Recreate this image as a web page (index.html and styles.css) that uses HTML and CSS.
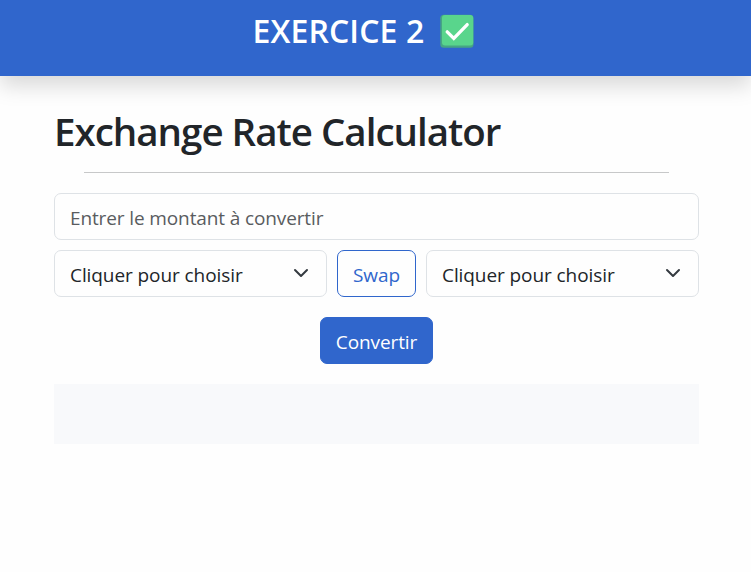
FILE: index.html
```html
<!DOCTYPE html>
<html lang="fr">
<head>
<meta charset="utf-8">
<title>Exchange Rate Calculator</title>
<link rel="stylesheet" href="styles.css">
</head>
<body>
<header class="topbar">
  <h2 class="topbar-title">EXERCICE 2</h2>
  <svg class="topbar-check" viewBox="0 0 34 34" aria-hidden="true">
    <rect x="0.3" y="0.8" width="33.2" height="33" rx="3.5" fill="#46a584"/>
    <rect x="2" y="1" width="31.2" height="30.4" rx="3" fill="#59d58c"/>
    <path d="M7.2 17.8l6.6 6.6L27.2 10.6" fill="none" stroke="#fff" stroke-width="3.3" stroke-linecap="round" stroke-linejoin="miter"/>
  </svg>
</header>
<main class="calculator">
  <h1 class="title">Exchange Rate Calculator</h1>
  <hr class="divider">
  <input class="field amount" type="text" placeholder="Entrer le montant à convertir">
  <div class="currencies">
    <div class="select-wrap">
      <select class="field"><option>Cliquer pour choisir</option></select>
      <svg class="chevron" viewBox="0 0 16 16" aria-hidden="true"><path d="M2 5l6 6 6-6"/></svg>
    </div>
    <button class="btn btn-outline" type="button">Swap</button>
    <div class="select-wrap">
      <select class="field"><option>Cliquer pour choisir</option></select>
      <svg class="chevron" viewBox="0 0 16 16" aria-hidden="true"><path d="M2 5l6 6 6-6"/></svg>
    </div>
  </div>
  <button class="btn btn-primary" type="button">Convertir</button>
  <div class="result"></div>
</main>
</body>
</html>
```
FILE: styles.css
```css
* {
  box-sizing: border-box;
}

body {
  margin: 0;
  background: #fefefe;
  color: #212529;
  font-family: "Open Sans", "Noto Sans", sans-serif;
  font-size: 19px;
}

.topbar {
  display: flex;
  justify-content: center;
  align-items: flex-start;
  gap: 16px;
  height: 76px;
  padding: 14px 25px 0 0;
  background: #3066cc;
  box-shadow: 0 10px 20px rgba(0, 0, 0, 0.15);
}

.topbar-title {
  margin: 0;
  width: 171px;
  color: #fff;
  font-size: 32px;
  font-weight: 560;
  line-height: 34px;
  letter-spacing: 0.1px;
  white-space: nowrap;
}

.topbar-check {
  width: 34px;
  height: 34px;
}

.calculator {
  display: flex;
  flex-direction: column;
  width: 645px;
  margin: 0 0 0 54px;
}

.title {
  margin: 31px 0 0;
  font-size: 38.5px;
  font-weight: 560;
  line-height: 48px;
  letter-spacing: -1px;
  white-space: nowrap;
}

.divider {
  width: 585px;
  height: 1px;
  margin: 17px 30px 20px;
  border: 0;
  background: #c7c8c9;
}

.field {
  display: block;
  width: 100%;
  height: 47px;
  margin: 0;
  padding: 2px 15px 0;
  border: 1px solid #dee2e6;
  border-radius: 7px;
  outline: 0;
  appearance: none;
  background: #fefefe;
  color: #212529;
  font: inherit;
  letter-spacing: -0.08px;
}

.field::placeholder {
  color: #595c5f;
  letter-spacing: -0.12px;
  opacity: 1;
}

.currencies {
  display: grid;
  grid-template-columns: 273px 79px 273px;
  gap: 10px;
  margin: 10px 0 20px;
}

.select-wrap {
  position: relative;
}

.chevron {
  position: absolute;
  top: 15px;
  right: 18px;
  width: 16px;
  height: 16px;
  fill: none;
  stroke: #343a40;
  stroke-width: 2;
  stroke-linecap: round;
  stroke-linejoin: round;
}

.btn {
  height: 47px;
  padding: 2px 0 0;
  border: 1px solid #3066cc;
  border-radius: 7px;
  font: inherit;
  letter-spacing: -0.1px;
}

.btn-outline {
  background: #fefefe;
  color: #3066cc;
}

.btn-primary {
  align-self: center;
  width: 113px;
  background: #3066cc;
  color: #fff;
}

.result {
  height: 60px;
  margin-top: 20px;
  background: #f8f9fb;
}
```
